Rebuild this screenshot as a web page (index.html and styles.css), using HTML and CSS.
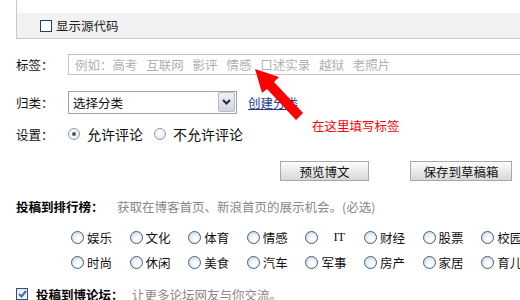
FILE: index.html
```html
<!DOCTYPE html>
<html lang="zh-CN">
<head>
  <meta charset="UTF-8" />
  <title>发博文</title>
  <link rel="stylesheet" href="styles.css">
</head>
<body>

  <div class="editor">
    <div class="editor-body"></div>
    <div class="editor-foot">
      <span class="checkbox"></span>
      <span>显示源代码</span>
    </div>
  </div>

  <div class="row row-tag">
    <span class="label">标签：</span>
    <div class="tag-input">例如：高考 互联网 影评 情感 口述实录 越狱 老照片</div>
  </div>

  <div class="row row-cat">
    <span class="label">归类：</span>
    <div class="select">
      <span class="select-text">选择分类</span>
      <span class="select-btn">
        <svg width="9" height="6" viewBox="0 0 9 6"><path d="M1 1 L4.5 4.5 L8 1" fill="none" stroke="#1d2b4a" stroke-width="2"/></svg>
      </span>
    </div>
    <a class="new-cat" href="#">创建分类</a>
  </div>

  <div class="row row-set">
    <span class="label">设置：</span>
    <span class="opt"><span class="radio checked"></span>允许评论</span>
    <span class="opt"><span class="radio"></span>不允许评论</span>
  </div>

  <div class="buttons">
    <button class="btn btn-preview">预览博文</button>
    <button class="btn btn-save">保存到草稿箱</button>
  </div>

  <div class="section">
    <b>投稿到排行榜：</b>
    <span class="hint">获取在博客首页、新浪首页的展示机会。(必选)</span>
  </div>

  <div class="cats">
    <span class="cat"><span class="radio blue"></span>娱乐</span>
    <span class="cat"><span class="radio blue"></span>文化</span>
    <span class="cat"><span class="radio blue"></span>体育</span>
    <span class="cat"><span class="radio blue"></span>情感</span>
    <span class="cat"><span class="radio blue"></span><span class="it">IT</span></span>
    <span class="cat"><span class="radio blue"></span>财经</span>
    <span class="cat"><span class="radio blue"></span>股票</span>
    <span class="cat"><span class="radio blue"></span>校园</span>
    <span class="cat"><span class="radio blue"></span>时尚</span>
    <span class="cat"><span class="radio blue"></span>休闲</span>
    <span class="cat"><span class="radio blue"></span>美食</span>
    <span class="cat"><span class="radio blue"></span>汽车</span>
    <span class="cat"><span class="radio blue"></span>军事</span>
    <span class="cat"><span class="radio blue"></span>房产</span>
    <span class="cat"><span class="radio blue"></span>家居</span>
    <span class="cat"><span class="radio blue"></span>育儿</span>
  </div>

  <div class="section section-forum">
    <span class="checkbox checked">
      <svg width="9" height="8" viewBox="0 0 9 8"><path d="M1 4 L3.5 6.5 L8 1" fill="none" stroke="#4a6a9a" stroke-width="2"/></svg>
    </span>
    <b>投稿到博论坛：</b>
    <span class="hint">让更多论坛网友与你交流。</span>
  </div>

  <!-- annotation -->
  <svg class="arrow" width="520" height="300" viewBox="0 0 520 300">
    <polygon points="255,69 279,77 274,82 303,113 296,120 267,89 262,93" fill="#ff0000"/>
  </svg>
  <span class="note">在这里填写标签</span>

</body>
</html>
```

FILE: styles.css
```css
* {
  box-sizing: border-box;
  margin: 0;
  padding: 0;
}

body {
  font-family: "Noto Sans CJK SC", "Liberation Sans", sans-serif;
  font-size: 12px;
  color: #222;
  background: #fff;
  padding-left: 16px;
  width: 520px;
  height: 300px;
  overflow: hidden;
  position: relative;
}

.editor {
  width: 540px;
  border-left: 1px solid #c8c8c8;
  border-bottom: 1px solid #c8c8c8;
}

.editor-body {
  height: 13px;
  background: #fff;
}

.editor-foot {
  height: 25px;
  background: #f2f2f2;
  display: flex;
  align-items: center;
  padding-left: 23px;
  gap: 4px;
  color: #222;
  font-size: 12.5px;
}

.checkbox {
  width: 12px;
  height: 12px;
  border: 1px solid #1e3f80;
  background: #fff;
  display: inline-flex;
  align-items: center;
  justify-content: center;
}

.checkbox.checked {
  border-color: #2a4f86;
  background: linear-gradient(#e4e8ee, #f8f8f8);
}

.row {
  display: flex;
  align-items: center;
}

.label {
  width: 52px;
  font-size: 12.5px;
  color: #111;
}

.row-tag {
  margin-top: 15px;
  height: 21px;
}

.tag-input {
  flex: 1;
  height: 21px;
  border: 1px solid #c4c4c4;
  margin-right: -40px;
  color: #b0b0b0;
  padding-left: 6px;
  line-height: 19px;
  font-size: 12.5px;
  word-spacing: 6px;
  white-space: nowrap;
}

.row-cat {
  margin-top: 15px;
  height: 24px;
}

.select {
  width: 169px;
  height: 23px;
  border: 1px solid #9aa3ad;
  display: flex;
  align-items: center;
  justify-content: space-between;
  padding: 1px 1px 1px 4px;
}

.select-text {
  font-size: 12.5px;
  color: #111;
}

.select-btn {
  width: 17px;
  height: 20px;
  border: 1px solid #b5bcc6;
  border-radius: 2px;
  background: linear-gradient(#eef1f4, #cfd5dc);
  display: flex;
  align-items: center;
  justify-content: center;
}

.new-cat {
  margin-left: 11px;
  color: #1d3d8a;
  font-size: 12.5px;
  text-decoration: underline;
}

.row-set {
  margin-top: 8px;
  height: 24px;
}

.opt {
  display: inline-flex;
  align-items: center;
  gap: 7px;
  font-size: 14px;
  color: #111;
  margin-right: 11px;
}

.opt:first-of-type {
  margin-left: 2px;
}

.radio {
  width: 12px;
  height: 12px;
  border-radius: 50%;
  border: 1px solid #8b9bb0;
  background: radial-gradient(circle at 40% 40%, #fff, #e2e6ea);
  display: inline-block;
  position: relative;
}

.radio.checked::after {
  content: "";
  position: absolute;
  left: 3px;
  top: 3px;
  width: 4px;
  height: 4px;
  border-radius: 50%;
  background: #555;
}

.radio.blue {
  width: 13px;
  height: 13px;
  border: 1px solid #3a5f8f;
  background: radial-gradient(circle at 60% 65%, #fff 20%, #d5dbe3 80%);
}

.buttons {
  display: flex;
  margin-top: 15px;
  padding-left: 264px;
  gap: 41px;
  height: 20px;
}

.btn {
  font-family: inherit;
  font-size: 12.5px;
  color: #111;
  height: 20px;
  border: 1px solid #a8a8a8;
  background: linear-gradient(#fdfdfd, #e6e6e6 60%, #d8d8d8);
}

.btn-preview {
  width: 89px;
}

.btn-save {
  width: 102px;
}

.section {
  display: flex;
  align-items: center;
  height: 20px;
  margin-top: 15px;
}

.section b {
  font-size: 12.5px;
  color: #000;
  width: 101px;
}

.hint {
  color: #888;
  font-size: 12.5px;
}

.cats {
  display: grid;
  grid-template-columns: repeat(8, 58.6px);
  padding-left: 55px;
  margin-top: 12px;
  row-gap: 6px;
}

.cat {
  display: flex;
  align-items: center;
  gap: 3px;
  height: 19px;
  font-size: 12.5px;
  color: #111;
  white-space: nowrap;
}

.it {
  padding-left: 12px;
  font-family: "Liberation Serif", serif;
}

.section-forum {
  margin-top: 12px;
  gap: 8px;
}

.section-forum b {
  width: 88px;
}

.arrow {
  position: absolute;
  left: 0;
  top: 0;
  pointer-events: none;
}

.note {
  position: absolute;
  left: 312px;
  top: 116px;
  color: #ff0000;
  font-size: 12.5px;
}
```
